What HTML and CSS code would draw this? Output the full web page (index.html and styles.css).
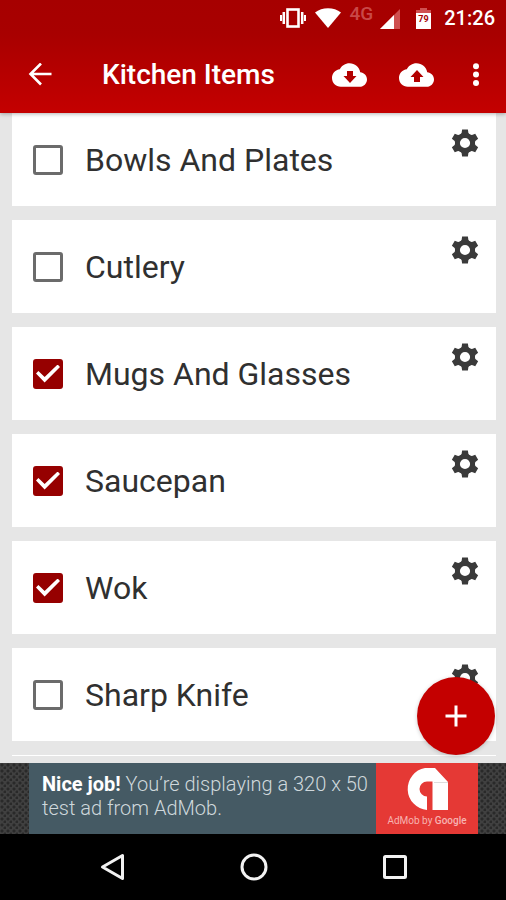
FILE: index.html
```html
<!DOCTYPE html>
<html lang="en">
<head>
<meta charset="utf-8">
<meta name="viewport" content="width=device-width, initial-scale=1">
<title>Kitchen Items</title>
<link rel="stylesheet" href="styles.css">
</head>
<body>
<svg class="defs" aria-hidden="true">
  <symbol id="gear" viewBox="-14 -14 28 28">
    <circle r="7.600" fill="none" stroke="currentColor" stroke-width="5"/>
    <g fill="currentColor">
      <path id="tooth" d="M-5.200-8 L-3.400-10 L-2.900-13.500 H2.900 L3.400-10 L5.200-8Z"/>
      <use href="#tooth" transform="rotate(60)"/>
      <use href="#tooth" transform="rotate(120)"/>
      <use href="#tooth" transform="rotate(180)"/>
      <use href="#tooth" transform="rotate(240)"/>
      <use href="#tooth" transform="rotate(300)"/>
    </g>
  </symbol>
  <symbol id="cloud" viewBox="0 4 24 16">
    <path fill="#fff" d="M19.350 10.040C18.670 6.590 15.640 4 12 4 9.110 4 6.600 5.640 5.350 8.040 2.340 8.360 0 10.910 0 14c0 3.310 2.690 6 6 6h13c2.760 0 5-2.240 5-5 0-2.640-2.050-4.780-4.650-4.960z"/>
  </symbol>
</svg>
<header class="top">
  <div class="status">
    <svg width="28" height="22" viewBox="0 0 28 22"><g fill="none" stroke="#fff"><rect x="8.500" y="2.500" width="11" height="17" stroke-width="2.600"/><path d="M4.800 5v12M23.200 5v12" stroke-width="2.500"/><path d="M2 8v6M26 8v6" stroke-width="2"/></g></svg>
    <svg class="wifi" width="26" height="20" viewBox="0 0 26 20"><path fill="#fff" d="M0 4.500C7-1.200 19-1.200 26 4.500L13 20Z"/></svg>
    <span class="network">4G</span>
    <svg class="signal" width="20" height="20" viewBox="0 0 20 20"><path fill="#cf5050" d="M20 0V20H0Z"/><path fill="#fff" d="M14 6V20H0Z"/></svg>
    <svg class="battery" width="15" height="21" viewBox="0 0 15 21"><path fill="#cf5050" d="M4 0h7v2h4v4H0V2h4Z"/><path fill="#fff" d="M0 5h15v16H0Z"/><text x="7.500" y="14" text-anchor="middle" font-size="9" font-weight="700" fill="#a50000">79</text></svg>
    <time class="clock">21:26</time>
  </div>
  <div class="toolbar">
    <button class="icon-button back" aria-label="Back"><svg width="24" height="24" viewBox="0 0 24 24"><path fill="none" stroke="#fff" stroke-width="2.600" d="M23.500 11H2.500M13 0.500L2.500 11L13 21.500"/></svg></button>
    <h1>Kitchen Items</h1>
    <button class="icon-button cloud" aria-label="Download"><svg width="35" height="24" viewBox="0 0 35 24"><use href="#cloud"/><path fill="#b30000" d="M15 8h6v5h3.500l-6.500 7-6.500-7h3.500Z"/></svg></button>
    <button class="icon-button cloud" aria-label="Upload"><svg width="35" height="24" viewBox="0 0 35 24"><use href="#cloud"/><path fill="#b30000" d="M15 19h6v-5h3.500l-6.500-7-6.500 7h3.500Z"/></svg></button>
    <button class="icon-button more" aria-label="More options"><svg width="8" height="24" viewBox="0 0 8 24"><g fill="#fff"><circle cx="4" cy="3.200" r="3"/><circle cx="4" cy="11.500" r="3"/><circle cx="4" cy="20" r="3"/></g></svg></button>
  </div>
</header>
<main class="content">
  <ul class="list">
    <li class="card"><label><input type="checkbox"><span>Bowls And Plates</span></label><button class="gear" aria-label="Item settings"><svg><use href="#gear"/></svg></button></li>
    <li class="card"><label><input type="checkbox"><span>Cutlery</span></label><button class="gear" aria-label="Item settings"><svg><use href="#gear"/></svg></button></li>
    <li class="card"><label><input type="checkbox" checked><span>Mugs And Glasses</span></label><button class="gear" aria-label="Item settings"><svg><use href="#gear"/></svg></button></li>
    <li class="card"><label><input type="checkbox" checked><span>Saucepan</span></label><button class="gear" aria-label="Item settings"><svg><use href="#gear"/></svg></button></li>
    <li class="card"><label><input type="checkbox" checked><span>Wok</span></label><button class="gear" aria-label="Item settings"><svg><use href="#gear"/></svg></button></li>
    <li class="card"><label><input type="checkbox"><span>Sharp Knife</span></label><button class="gear" aria-label="Item settings"><svg><use href="#gear"/></svg></button></li>
    <li class="card"></li>
  </ul>
  <button class="fab" aria-label="Add item"><svg width="22" height="22" viewBox="0 0 22 22"><path stroke="#fff" stroke-width="3" d="M11 0.500v21M0.500 11h21"/></svg></button>
</main>
<aside class="ad">
  <div class="banner">
    <p><b>Nice job!</b> You’re displaying a 320 x 50 test ad from AdMob.</p>
    <div class="brand">
      <svg width="44" height="44" viewBox="0 0 44 44"><path fill="#fff" d="M22 43V29.500A7.500 7.500 0 0 1 22 14.500H27.500V43H43V15L30 1H20A21 21.200 0 0 0 22 43Z"/><path fill="none" stroke="#ddd" d="M29 15.500h14"/></svg>
      <span>AdMob by <b>Google</b></span>
    </div>
  </div>
</aside>
<nav class="system">
  <button class="icon-button" aria-label="Back"><svg width="28" height="28" viewBox="0 0 28 28"><path fill="none" stroke="#f2f2f2" stroke-width="3" stroke-linejoin="round" d="M23.500 2.500V25.500L3.500 14Z"/></svg></button>
  <button class="icon-button" aria-label="Home"><svg width="28" height="28" viewBox="0 0 28 28"><circle cx="14" cy="14" r="12" fill="none" stroke="#f2f2f2" stroke-width="3"/></svg></button>
  <button class="icon-button" aria-label="Recent apps"><svg width="28" height="28" viewBox="0 0 28 28"><rect x="3.500" y="3.500" width="21" height="21" rx="1" fill="none" stroke="#f2f2f2" stroke-width="3"/></svg></button>
</nav>
</body>
</html>
```
FILE: styles.css
```css
* {
  box-sizing: border-box;
}

body {
  margin: 0;
  height: 100vh;
  display: flex;
  flex-direction: column;
  background: #e6e6e6;
  color: #303030;
  font-family: Roboto, "Liberation Sans", sans-serif;
}

button {
  border: 0;
  padding: 0;
  background: none;
  color: inherit;
  font: inherit;
}

svg {
  display: block;
}

.defs {
  position: absolute;
  width: 0;
  height: 0;
}

.top {
  position: relative;
  z-index: 1;
  background: linear-gradient(#a60000, #a80000 30%, #c40000);
  color: #fff;
  box-shadow: 0 1px 4px rgba(0, 0, 0, 0.3);
}

.status {
  display: flex;
  justify-content: flex-end;
  align-items: center;
  height: 36px;
  padding-right: 11px;
}

.wifi {
  margin-left: 8px;
}

.network {
  margin: 0 7px 8px 9px;
  color: #c94848;
  font-size: 19px;
  line-height: 20px;
  font-weight: 500;
}

.signal {
  margin-top: 2px;
}

.battery {
  margin-left: 16px;
}

.clock {
  margin-left: 13px;
  font-size: 20px;
  font-weight: 500;
}

.toolbar {
  display: flex;
  align-items: center;
  height: 77px;
  padding: 0 26px 0 28px;
}

h1 {
  flex: 1;
  margin: 0 0 0 50px;
  font-size: 28px;
  line-height: 36px;
  font-weight: 500;
}

.cloud {
  margin-right: 32px;
}

.more {
  margin-left: 6px;
}

.content {
  position: relative;
  flex: 1;
  min-height: 0;
  padding-bottom: 7px;
}

.list {
  height: 100%;
  margin: 0;
  padding: 0 10px 0 12px;
  overflow: hidden;
  list-style: none;
}

.card {
  display: flex;
  height: 93px;
  margin-bottom: 14px;
  padding: 0 17px 0 21px;
  background: #fff;
}

.card label {
  flex: 1;
  display: flex;
  align-items: center;
  gap: 22px;
  font-size: 32px;
}

.card input {
  appearance: none;
  flex: none;
  width: 30px;
  height: 30px;
  margin: 0;
  border: 3px solid #6b6b6b;
  border-radius: 3px;
}

.card input:checked {
  display: grid;
  place-items: center;
  border-color: #960000;
  background: #960000;
}

.card input:checked::before {
  content: "";
  width: 24px;
  height: 18px;
  background: #fff;
  clip-path: polygon(0 50%, 10% 36%, 36% 69%, 90% 0, 100% 14%, 36% 100%);
}

.gear {
  align-self: flex-start;
  margin-top: 16px;
  color: #3a3a3a;
}

.gear svg {
  width: 28px;
  height: 28px;
}

.fab {
  position: absolute;
  right: 11px;
  bottom: 8px;
  display: grid;
  place-items: center;
  width: 78px;
  height: 78px;
  border-radius: 50%;
  background: #c40000;
  box-shadow: 0 1px 4px rgba(0, 0, 0, 0.2);
}

.ad {
  display: flex;
  justify-content: center;
  padding: 0 28px 0 29px;
  background:
    radial-gradient(circle at 2px 2px, #292929 1px, transparent 2px) 0 0 / 6px 6px,
    radial-gradient(circle at 5px 5px, #292929 1px, transparent 2px) 0 0 / 6px 6px,
    #404040;
}

.banner {
  flex: 1;
  display: flex;
  height: 71px;
  background: #455a64;
}

.banner p {
  flex: 1;
  margin: 0;
  padding: 9px 0 0 13px;
  color: #cfd8dc;
  font-size: 20px;
  line-height: 24px;
  font-weight: 300;
}

.banner p b {
  color: #fff;
  font-weight: 700;
}

.brand {
  display: flex;
  flex-direction: column;
  align-items: center;
  width: 102px;
  padding-top: 4px;
  background: #e53935;
  color: #f7b3b1;
  font-size: 10px;
  line-height: 20px;
}

.brand b {
  font-weight: 500;
}

.system {
  display: flex;
  justify-content: space-between;
  align-items: center;
  height: 66px;
  padding: 0 97px 0 99px;
  background: #000;
}
```
